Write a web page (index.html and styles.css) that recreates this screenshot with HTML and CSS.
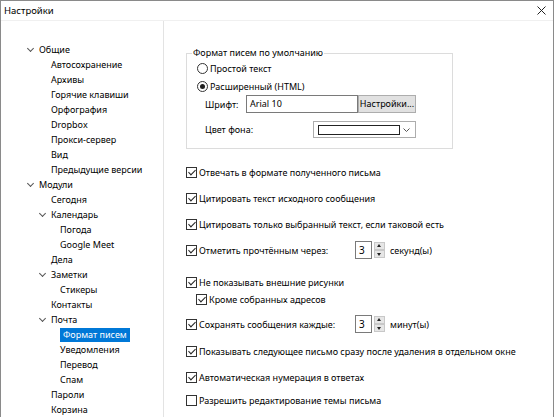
FILE: index.html
```html
<!DOCTYPE html>
<html lang="ru">
<head>
    <meta charset="UTF-8">
    <meta name="viewport" content="width=device-width, initial-scale=1.0">
    <title>Настройки</title>
    <link rel="stylesheet" href="styles.css">
</head>
<body>
    <div class="ventana">
        <div class="titulo">
            <span>Настройки</span>
            <svg class="cerrar" width="9" height="9" viewBox="0 0 9 9">
                <path d="M0.5 0.5 L8.5 8.5 M8.5 0.5 L0.5 8.5" stroke="#222" stroke-width="1" fill="none"/>
            </svg>
        </div>
        <div class="cuerpo">
            <div class="arbol">
                <div class="nodo n0 abierto">Общие</div>
                <div class="nodo n1">Автосохранение</div>
                <div class="nodo n1">Архивы</div>
                <div class="nodo n1">Горячие клавиши</div>
                <div class="nodo n1">Орфография</div>
                <div class="nodo n1">Dropbox</div>
                <div class="nodo n1">Прокси-сервер</div>
                <div class="nodo n1">Вид</div>
                <div class="nodo n1">Предыдущие версии</div>
                <div class="nodo n0 abierto">Модули</div>
                <div class="nodo n1">Сегодня</div>
                <div class="nodo n1 abierto">Календарь</div>
                <div class="nodo n2">Погода</div>
                <div class="nodo n2">Google Meet</div>
                <div class="nodo n1">Дела</div>
                <div class="nodo n1 abierto">Заметки</div>
                <div class="nodo n2">Стикеры</div>
                <div class="nodo n1">Контакты</div>
                <div class="nodo n1 abierto">Почта</div>
                <div class="nodo n2"><span class="activo">Формат писем</span></div>
                <div class="nodo n2">Уведомления</div>
                <div class="nodo n2">Перевод</div>
                <div class="nodo n2">Спам</div>
                <div class="nodo n1">Пароли</div>
                <div class="nodo n1">Корзина</div>
            </div>

            <div class="pagina">
                <fieldset class="grupo">
                    <legend>Формат писем по умолчанию</legend>
                    <div class="radio"><span class="circulo"></span>Простой текст</div>
                    <div class="radio"><span class="circulo marcado"></span>Расширенный (HTML)</div>
                    <div class="campo">
                        <span class="etiqueta">Шрифт:</span>
                        <span class="entrada">Arial 10</span>
                        <span class="boton">Настройки...</span>
                    </div>
                    <div class="campo fondo">
                        <span class="etiqueta">Цвет фона:</span>
                        <span class="combo">
                            <span class="muestra"></span>
                            <svg width="7" height="4" viewBox="0 0 7 4">
                                <path d="M0.5 0.5 L3.5 3.5 L6.5 0.5" stroke="#555" fill="none"/>
                            </svg>
                        </span>
                    </div>
                </fieldset>

                <div class="opciones">
                    <div class="fila"><span class="caja si"></span>Отвечать в формате полученного письма</div>
                    <div class="fila"><span class="caja si"></span>Цитировать текст исходного сообщения</div>
                    <div class="fila"><span class="caja si"></span>Цитировать только выбранный текст, если таковой есть</div>
                    <div class="fila giro">
                        <span class="caja si"></span><span class="texto-giro">Отметить прочтённым через:</span>
                        <span class="spin"><span class="valor">3</span><span class="flechas"><i class="arriba"></i><i class="abajo"></i></span></span>
                        <span class="unidad">секунд(ы)</span>
                    </div>
                    <div class="fila extra"><span class="caja si"></span>Не показывать внешние рисунки</div>
                    <div class="fila sub"><span class="caja si"></span>Кроме собранных адресов</div>
                    <div class="fila giro">
                        <span class="caja si"></span><span class="texto-giro">Сохранять сообщения каждые:</span>
                        <span class="spin"><span class="valor">3</span><span class="flechas"><i class="arriba"></i><i class="abajo"></i></span></span>
                        <span class="unidad">минут(ы)</span>
                    </div>
                    <div class="fila"><span class="caja si"></span>Показывать следующее письмо сразу после удаления в отдельном окне</div>
                    <div class="fila"><span class="caja si"></span>Автоматическая нумерация в ответах</div>
                    <div class="fila ultima"><span class="caja"></span>Разрешить редактирование темы письма</div>
                </div>
            </div>
        </div>
    </div>
</body>
</html>
```

FILE: styles.css
```css
* {
    box-sizing: border-box;
}

body {
    margin: 0;
    font-family: "Noto Sans", "Open Sans", sans-serif;
    font-size: 9px;
    color: #000;
    background: #6f6f6f;
}

.ventana {
    width: 554px;
    height: 417px;
    background: #fff;
    border: 1px solid #8a8a8a;
    border-bottom: none;
    overflow: hidden;
}

.titulo {
    height: 20px;
    display: flex;
    align-items: center;
    justify-content: space-between;
    padding: 0 7px 1px 3px;
    border-bottom: 1px solid #f0f0f0;
    font-size: 9.5px;
}

.cuerpo {
    display: flex;
    height: 396px;
}

/* Árbol de secciones */
.arbol {
    width: 163px;
    border-right: 1px solid #e3e3e3;
    padding-top: 21px;
}

.nodo {
    height: 15px;
    line-height: 15px;
    position: relative;
    white-space: nowrap;
}

.n0 { padding-left: 38px; }
.n1 { padding-left: 50px; }
.n2 { padding-left: 59px; }

.abierto::before {
    content: "";
    position: absolute;
    top: 4px;
    width: 4px;
    height: 4px;
    border-right: 1px solid #555;
    border-bottom: 1px solid #555;
    transform: rotate(45deg);
}

.n0.abierto::before { left: 27px; }
.n1.abierto::before { left: 39px; }

.activo {
    display: inline-block;
    height: 14px;
    line-height: 14px;
    background: #0078d7;
    color: #fff;
    padding: 0 3px;
}

/* Página derecha */
.pagina {
    flex: 1;
    padding: 26px 0 0 22px;
}

.grupo {
    width: 267px;
    height: 102px;
    margin: 0;
    padding: 0 0 0 10px;
    border: 1px solid #dcdcdc;
}

.grupo legend {
    padding: 0 1px;
    margin-left: -5px;
    line-height: 12px;
}

.radio {
    display: flex;
    align-items: center;
    height: 18px;
}

.circulo {
    width: 11px;
    height: 11px;
    border: 1px solid #333;
    border-radius: 50%;
    margin-right: 2px;
    display: flex;
    align-items: center;
    justify-content: center;
}

.circulo.marcado::after {
    content: "";
    width: 5px;
    height: 5px;
    border-radius: 50%;
    background: #222;
}

.campo {
    display: flex;
    align-items: center;
    height: 18px;
    padding-left: 8px;
}

.etiqueta {
    width: 41px;
}

.entrada {
    width: 112px;
    height: 18px;
    border: 1px solid #7a7a7a;
    padding: 0 3px;
    line-height: 16px;
}

.boton {
    width: 58px;
    height: 18px;
    background: #e1e1e1;
    border: 1px solid #adadad;
    text-align: center;
    line-height: 16px;
    white-space: nowrap;
}

.campo.fondo {
    margin-top: 8px;
    height: 17px;
}

.fondo .etiqueta {
    width: 108px;
}

.combo {
    width: 103px;
    height: 17px;
    border: 1px solid #adadad;
    display: flex;
    align-items: center;
    justify-content: space-between;
    padding: 0 5px 0 4px;
}

.muestra {
    width: 82px;
    height: 10px;
    border: 1px solid #222;
    background: #fff;
}

/* Opciones */
.opciones {
    margin-top: 15px;
}

.fila {
    display: flex;
    align-items: center;
    height: 16px;
    margin-bottom: 10px;
    white-space: nowrap;
}

.caja {
    width: 11px;
    height: 11px;
    border: 1px solid #333;
    margin-right: 2px;
    position: relative;
}

.caja.si::after {
    content: "";
    position: absolute;
    left: 3px;
    top: 0;
    width: 3px;
    height: 6px;
    border-right: 1px solid #222;
    border-bottom: 1px solid #222;
    transform: rotate(45deg);
}

.fila.giro {
    height: 18px;
    margin-top: -1px;
}

.texto-giro {
    width: 156px;
}

.spin {
    display: flex;
    height: 18px;
}

.valor {
    width: 17px;
    border: 1px solid #7a7a7a;
    padding-left: 3px;
    line-height: 16px;
    font-size: 10px;
}

.flechas {
    display: flex;
    flex-direction: column;
    justify-content: space-between;
    margin-left: 2px;
    width: 11px;
    padding: 1px 0;
}

.flechas i {
    height: 8px;
    background: #e6e6e6;
    border: 1px solid #c8c8c8;
    position: relative;
}

.flechas i::after {
    content: "";
    position: absolute;
    left: 2px;
    border-left: 2.5px solid transparent;
    border-right: 2.5px solid transparent;
}

.arriba::after {
    top: 1px;
    border-bottom: 3px solid #222;
}

.abajo::after {
    top: 2px;
    border-top: 3px solid #222;
}

.unidad {
    margin-left: 5px;
}

.fila.extra {
    margin-top: 15px;
    margin-bottom: 1px;
}

.fila.sub {
    padding-left: 10px;
    margin-bottom: 9px;
}

.fila.ultima {
    margin-top: -3px;
}
```
